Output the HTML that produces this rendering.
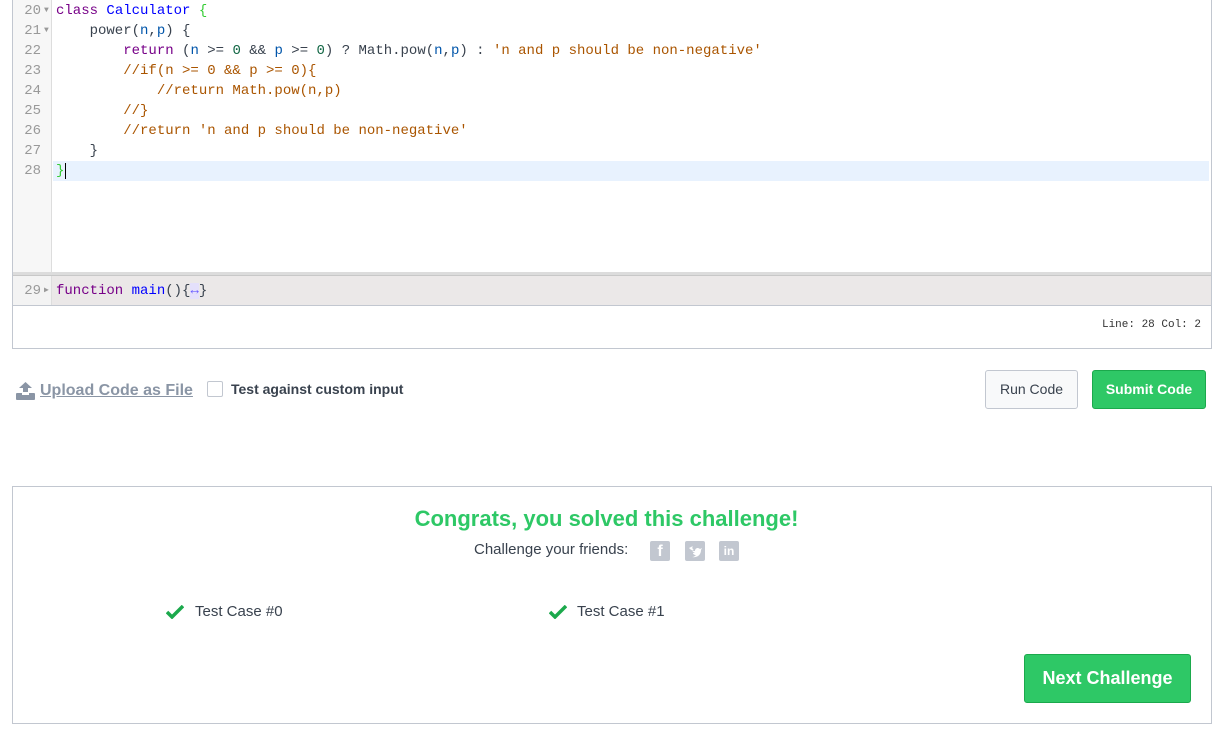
<!DOCTYPE html>
<html><head><meta charset="utf-8"><style>
*{margin:0;padding:0;box-sizing:border-box}
body{width:1226px;height:730px;background:#fff;font-family:"Liberation Sans",sans-serif;position:relative;overflow:hidden;color:#39424e}
.ed{position:absolute;left:12px;top:-1px;width:1200px;height:350px;border:1px solid #c2c7d0;border-top:none}
.gut{position:absolute;left:0;top:0;width:39px;height:273px;background:#f7f7f7;border-right:1px solid #ddd}
.ln{position:absolute;left:0;width:1198px;height:20px;font:14px/20px "Liberation Mono",monospace;white-space:pre}
.num{position:absolute;left:0;width:28px;text-align:right;color:#999}
.arr{position:absolute;left:31px;font-size:8px;color:#999}
.code{position:absolute;left:43px}
.k{color:#770088}.d{color:#0000ff}.v{color:#0055aa}.n{color:#116644}.s{color:#aa5500}.c{color:#a50}
.btn{position:absolute;border-radius:3px;font-weight:bold;font-size:14px;text-align:center}
.stat{position:absolute;right:10px;top:320px;font-family:"Liberation Mono",monospace;font-size:11px;color:#333}
</style></head><body>
<div class="ed">
<div class="gut"></div>
<div style="position:absolute;left:40px;top:162px;width:1156px;height:20px;background:#e8f2fe"></div>
<div class="ln" style="top:2px"><span class="num">20</span><span class="arr">▼</span><span class="code"><span class="k">class</span> <span class="d">Calculator</span> <span style="color:#3c3">{</span></span></div>
<div class="ln" style="top:22px"><span class="num">21</span><span class="arr">▼</span><span class="code">    power(<span class="v">n</span>,<span class="v">p</span>) {</span></div>
<div class="ln" style="top:42px"><span class="num">22</span><span class="code">        <span class="k">return</span> (<span class="v">n</span> &gt;= <span class="n">0</span> &amp;&amp; <span class="v">p</span> &gt;= <span class="n">0</span>) ? Math.pow(<span class="v">n</span>,<span class="v">p</span>) : <span class="s">'n and p should be non-negative'</span></span></div>
<div class="ln" style="top:62px"><span class="num">23</span><span class="code c">        //if(n &gt;= 0 &amp;&amp; p &gt;= 0){</span></div>
<div class="ln" style="top:82px"><span class="num">24</span><span class="code c">            //return Math.pow(n,p)</span></div>
<div class="ln" style="top:102px"><span class="num">25</span><span class="code c">        //}</span></div>
<div class="ln" style="top:122px"><span class="num">26</span><span class="code c">        //return 'n and p should be non-negative'</span></div>
<div class="ln" style="top:142px"><span class="num">27</span><span class="code">    }</span></div>
<div class="ln" style="top:162px"><span class="num">28</span><span class="code"><span style="color:#3c3">}</span><span style="border-left:1px solid #000;margin-left:1px"></span></span></div>
<div style="position:absolute;left:0;top:273px;width:1198px;height:4px;background:#dcdcdc;border-bottom:1px solid #c8c8c8"></div>
<div style="position:absolute;left:0;top:277px;width:1198px;height:30px;background:#ebe8e8;border-bottom:1px solid #c2c7d0"></div>
<div style="position:absolute;left:0;top:277px;width:39px;height:29px;background:#f3f3f3;border-right:1px solid #ddd"></div>
<div class="ln" style="top:282px"><span class="num">29</span><span class="arr">▶</span><span class="code"><span class="k">function</span> <span class="d">main</span>(){<span style="color:#6a5cff;background:#e4e0fb">↔</span>}</span></div>
<div class="stat">Line: 28 Col: 2</div>
</div>
<svg style="position:absolute;left:16px;top:382px" width="19" height="18" viewBox="0 0 19 18"><path d="M9.5 0L3 6h4v6h5V6h4z" fill="#8a95a5"/><rect x="0" y="11" width="19" height="7" rx="1" fill="#8a95a5"/><rect x="6" y="10" width="7" height="3" fill="#fff"/></svg>
<div style="position:absolute;left:40px;top:382px;font-size:16px;font-weight:bold;color:#8a95a5;text-decoration:underline">Upload Code as File</div>
<div style="position:absolute;left:207px;top:381px;width:16px;height:16px;border:1px solid #c2c7d0;border-radius:2px"></div>
<div style="position:absolute;left:231px;top:381px;font-size:14px;font-weight:bold;color:#39424e">Test against custom input</div>
<div class="btn" style="left:985px;top:370px;width:93px;height:39px;border:1px solid #c2c7d0;background:#f8f9fa;line-height:37px;color:#39424e;font-weight:normal;font-size:14px">Run Code</div>
<div class="btn" style="left:1092px;top:370px;width:114px;height:39px;background:#2ec866;border:1px solid #1ba94c;line-height:37px;color:#fff">Submit Code</div>
<div style="position:absolute;left:12px;top:486px;width:1200px;height:238px;border:1px solid #c2c7d0"></div>
<div style="position:absolute;left:0;width:1213px;top:506px;text-align:center;font-size:22px;font-weight:bold;color:#2ec866">Congrats, you solved this challenge!</div>
<div style="position:absolute;left:474px;top:541px;font-size:15px;color:#39424e">Challenge your friends:</div>
<div style="position:absolute;left:650px;top:541px;width:20px;height:20px;background:#c2c7d0;border-radius:2px;color:#fff;font-weight:bold;font-size:16px;text-align:center;line-height:22px">f</div>
<div style="position:absolute;left:685px;top:541px;width:20px;height:20px;background:#c2c7d0;border-radius:2px"><svg width="20" height="20" viewBox="0 0 20 20"><path d="M4 7c2 2 4 3 6 3 0-3 3-4 5-2l2-1-1 2c0 5-4 8-9 7 2 0 3-1 4-2-2 0-3-1-3-2h2c-2-1-3-2-3-3h2c-2-1-2-3-1-4z" fill="#fff"/></svg></div>
<div style="position:absolute;left:719px;top:541px;width:20px;height:20px;background:#c2c7d0;border-radius:2px;color:#fff;font-weight:bold;font-size:12px;text-align:center;line-height:20px">in</div>
<svg style="position:absolute;left:166px;top:605px" width="18" height="14" viewBox="0 0 18 14"><path d="M1 7l5 5L17 1" stroke="#1ba94c" stroke-width="3.5" fill="none"/></svg>
<div style="position:absolute;left:195px;top:603px;font-size:15px;color:#39424e">Test Case #0</div>
<svg style="position:absolute;left:549px;top:605px" width="18" height="14" viewBox="0 0 18 14"><path d="M1 7l5 5L17 1" stroke="#1ba94c" stroke-width="3.5" fill="none"/></svg>
<div style="position:absolute;left:577px;top:603px;font-size:15px;color:#39424e">Test Case #1</div>
<div class="btn" style="left:1024px;top:654px;width:167px;height:49px;background:#2ec866;border:1px solid #1ba94c;line-height:47px;color:#fff;font-size:18px">Next Challenge</div>
</body></html>
